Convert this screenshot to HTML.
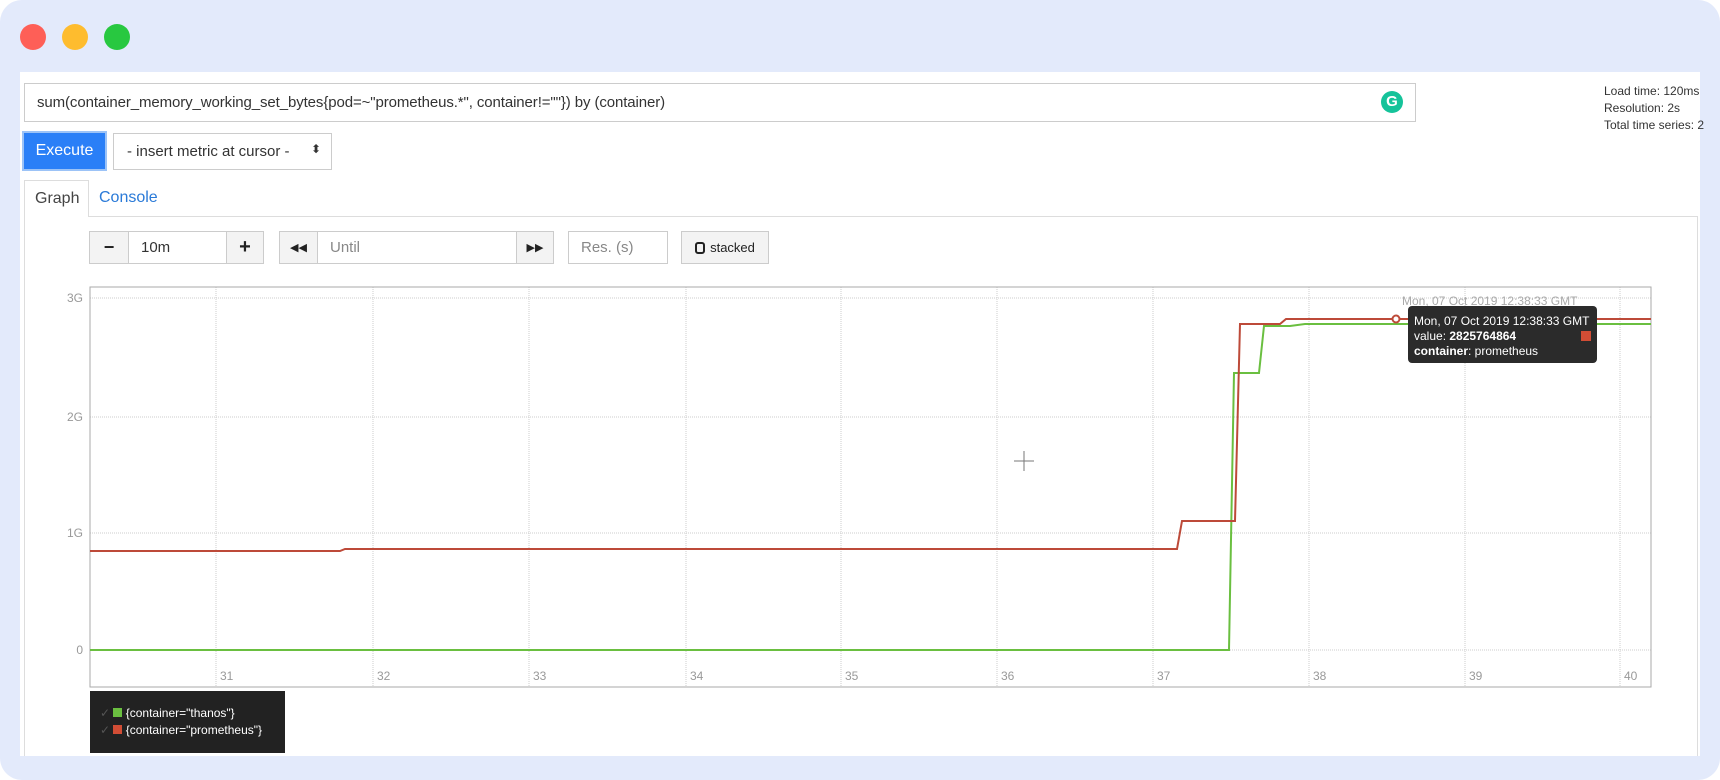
<!DOCTYPE html>
<html><head><meta charset="utf-8"><style>
*{box-sizing:border-box;margin:0;padding:0}
body{width:1720px;height:780px;background:#fff;font-family:"Liberation Sans",sans-serif;position:relative;overflow:hidden}
.bg{position:absolute;left:0;top:0;width:1720px;height:780px;background:#e3eafb;border-radius:22px}
.a{position:absolute}
.dot{position:absolute;width:26px;height:26px;border-radius:50%;top:24px}
.panel{position:absolute;left:20px;top:72px;width:1680px;height:684px;background:#fff}
.box{position:absolute;border:1px solid #ccc;background:#fff;font-size:15px;color:#333;white-space:nowrap}
.btn{position:absolute;border:1px solid #ccc;background:#f3f3f3;display:flex;align-items:center;justify-content:center;color:#222}
</style></head><body>
<div class="bg"></div>
<div class="dot" style="left:20px;background:#fe5f57"></div>
<div class="dot" style="left:62px;background:#febc2e"></div>
<div class="dot" style="left:104px;background:#28c840"></div>
<div class="panel"></div>
<div class="box" style="left:24px;top:83px;width:1392px;height:39px;padding:10px 12px;font-size:15px;letter-spacing:-0.1px">sum(container_memory_working_set_bytes{pod=~"prometheus.*", container!=""}) by (container)</div>
<div class="a" style="left:1381px;top:91px;width:22px;height:22px;border-radius:50%;background:#15c39a;color:#fff;font-weight:bold;font-size:15px;text-align:center;line-height:22px">G</div>
<div class="a" style="left:1604px;top:83px;font-size:12px;color:#333;line-height:17px">Load time: 120ms<br>Resolution: 2s<br>Total time series: 2</div>
<div class="a" style="left:22px;top:131px;width:85px;height:40px;background:#2a7ff7;border:2px solid #9cc3f7;color:#fff;font-size:16px;text-align:center;line-height:36px">Execute</div>
<div class="box" style="left:113px;top:133px;width:219px;height:37px;padding:9px 13px;font-size:15px">- insert metric at cursor -</div>
<div class="a" style="left:311px;top:142px;font-size:12px;color:#333">⬍</div>
<div class="a" style="left:24px;top:216px;width:1674px;height:540px;border:1px solid #ddd;border-bottom:none"></div>
<div class="a" style="left:24px;top:180px;width:65px;height:37px;background:#fff;border:1px solid #ddd;border-bottom:none;font-size:16px;color:#444;padding:9px 10px">Graph</div>
<div class="a" style="left:99px;top:189px;font-size:16px;color:#2a7ad8">Console</div>
<div class="btn" style="left:89px;top:231px;width:40px;height:33px;font-weight:bold;font-size:18px">−</div>
<div class="box" style="left:128px;top:231px;width:99px;height:33px;padding:7px 12px">10m</div>
<div class="btn" style="left:226px;top:231px;width:38px;height:33px;font-weight:bold;font-size:20px">+</div>
<div class="btn" style="left:279px;top:231px;width:39px;height:33px;font-size:11px">◀◀</div>
<div class="box" style="left:317px;top:231px;width:200px;height:33px;padding:7px 12px;color:#888">Until</div>
<div class="btn" style="left:516px;top:231px;width:38px;height:33px;font-size:11px">▶▶</div>
<div class="box" style="left:568px;top:231px;width:100px;height:33px;padding:7px 12px;color:#888">Res. (s)</div>
<div class="btn" style="left:681px;top:231px;width:88px;height:33px;font-size:13px"><span style="display:inline-block;width:10px;height:12px;border:2px solid #222;border-radius:3px;margin-right:5px"></span>stacked</div>
<svg class="a" style="left:0;top:0" width="1720" height="780" font-family="Liberation Sans" font-size="12" fill="#999">
<g stroke="#ccc" stroke-dasharray="1,1">
<line x1="90" y1="298" x2="1651" y2="298"/><line x1="90" y1="417" x2="1651" y2="417"/><line x1="90" y1="533" x2="1651" y2="533"/><line x1="90" y1="650" x2="1651" y2="650"/>
<line x1="216" y1="287" x2="216" y2="687"/><line x1="373" y1="287" x2="373" y2="687"/><line x1="529" y1="287" x2="529" y2="687"/><line x1="686" y1="287" x2="686" y2="687"/><line x1="841" y1="287" x2="841" y2="687"/><line x1="997" y1="287" x2="997" y2="687"/><line x1="1153" y1="287" x2="1153" y2="687"/><line x1="1309" y1="287" x2="1309" y2="687"/><line x1="1465" y1="287" x2="1465" y2="687"/><line x1="1620" y1="287" x2="1620" y2="687"/>
</g>
<rect x="90" y="287" width="1561" height="400" fill="none" stroke="#aaa"/>
<g text-anchor="end"><text x="83" y="302">3G</text><text x="83" y="421">2G</text><text x="83" y="537">1G</text><text x="83" y="654">0</text></g>
<text x="220" y="680">31</text><text x="377" y="680">32</text><text x="533" y="680">33</text><text x="690" y="680">34</text><text x="845" y="680">35</text><text x="1001" y="680">36</text><text x="1157" y="680">37</text><text x="1313" y="680">38</text><text x="1469" y="680">39</text><text x="1624" y="680">40</text>
<polyline fill="none" stroke="#6abf40" stroke-width="2" points="90,650 1229,650 1234,373 1259,373 1264,326 1290,326 1305,324 1651,324"/>
<polyline fill="none" stroke="#bd4a39" stroke-width="2" points="90,551 340,551 345,549 1177,549 1182,521 1235,521 1240,324 1280,324 1286,319 1651,319"/>
<circle cx="1396" cy="319" r="3.5" fill="#fff" stroke="#bd4a39" stroke-width="2"/>
<text x="1402" y="305" fill="#aaa" font-size="12">Mon, 07 Oct 2019 12:38:33 GMT</text>
<g stroke="#777"><line x1="1014" y1="461" x2="1034" y2="461"/><line x1="1024" y1="451" x2="1024" y2="471"/></g>
</svg>
<div class="a" style="left:1408px;top:306px;width:189px;height:57px;background:#2b2b2b;border-radius:4px;color:#fff;font-size:12px;padding:8px 6px;line-height:15px">Mon, 07 Oct 2019 12:38:33 GMT<br>value: <b>2825764864</b><span style="float:right;width:10px;height:10px;background:#d14d35;margin-top:2px"></span><br><b>container</b>: prometheus</div>
<div class="a" style="left:90px;top:691px;width:195px;height:62px;background:#222;color:#fff;font-size:12px;padding:14px 10px;line-height:17px">
<span style="color:#555">✓</span> <span style="display:inline-block;width:9px;height:9px;background:#6abf40"></span> {container="thanos"}<br>
<span style="color:#555">✓</span> <span style="display:inline-block;width:9px;height:9px;background:#d14d35"></span> {container="prometheus"}</div>
</body></html>
